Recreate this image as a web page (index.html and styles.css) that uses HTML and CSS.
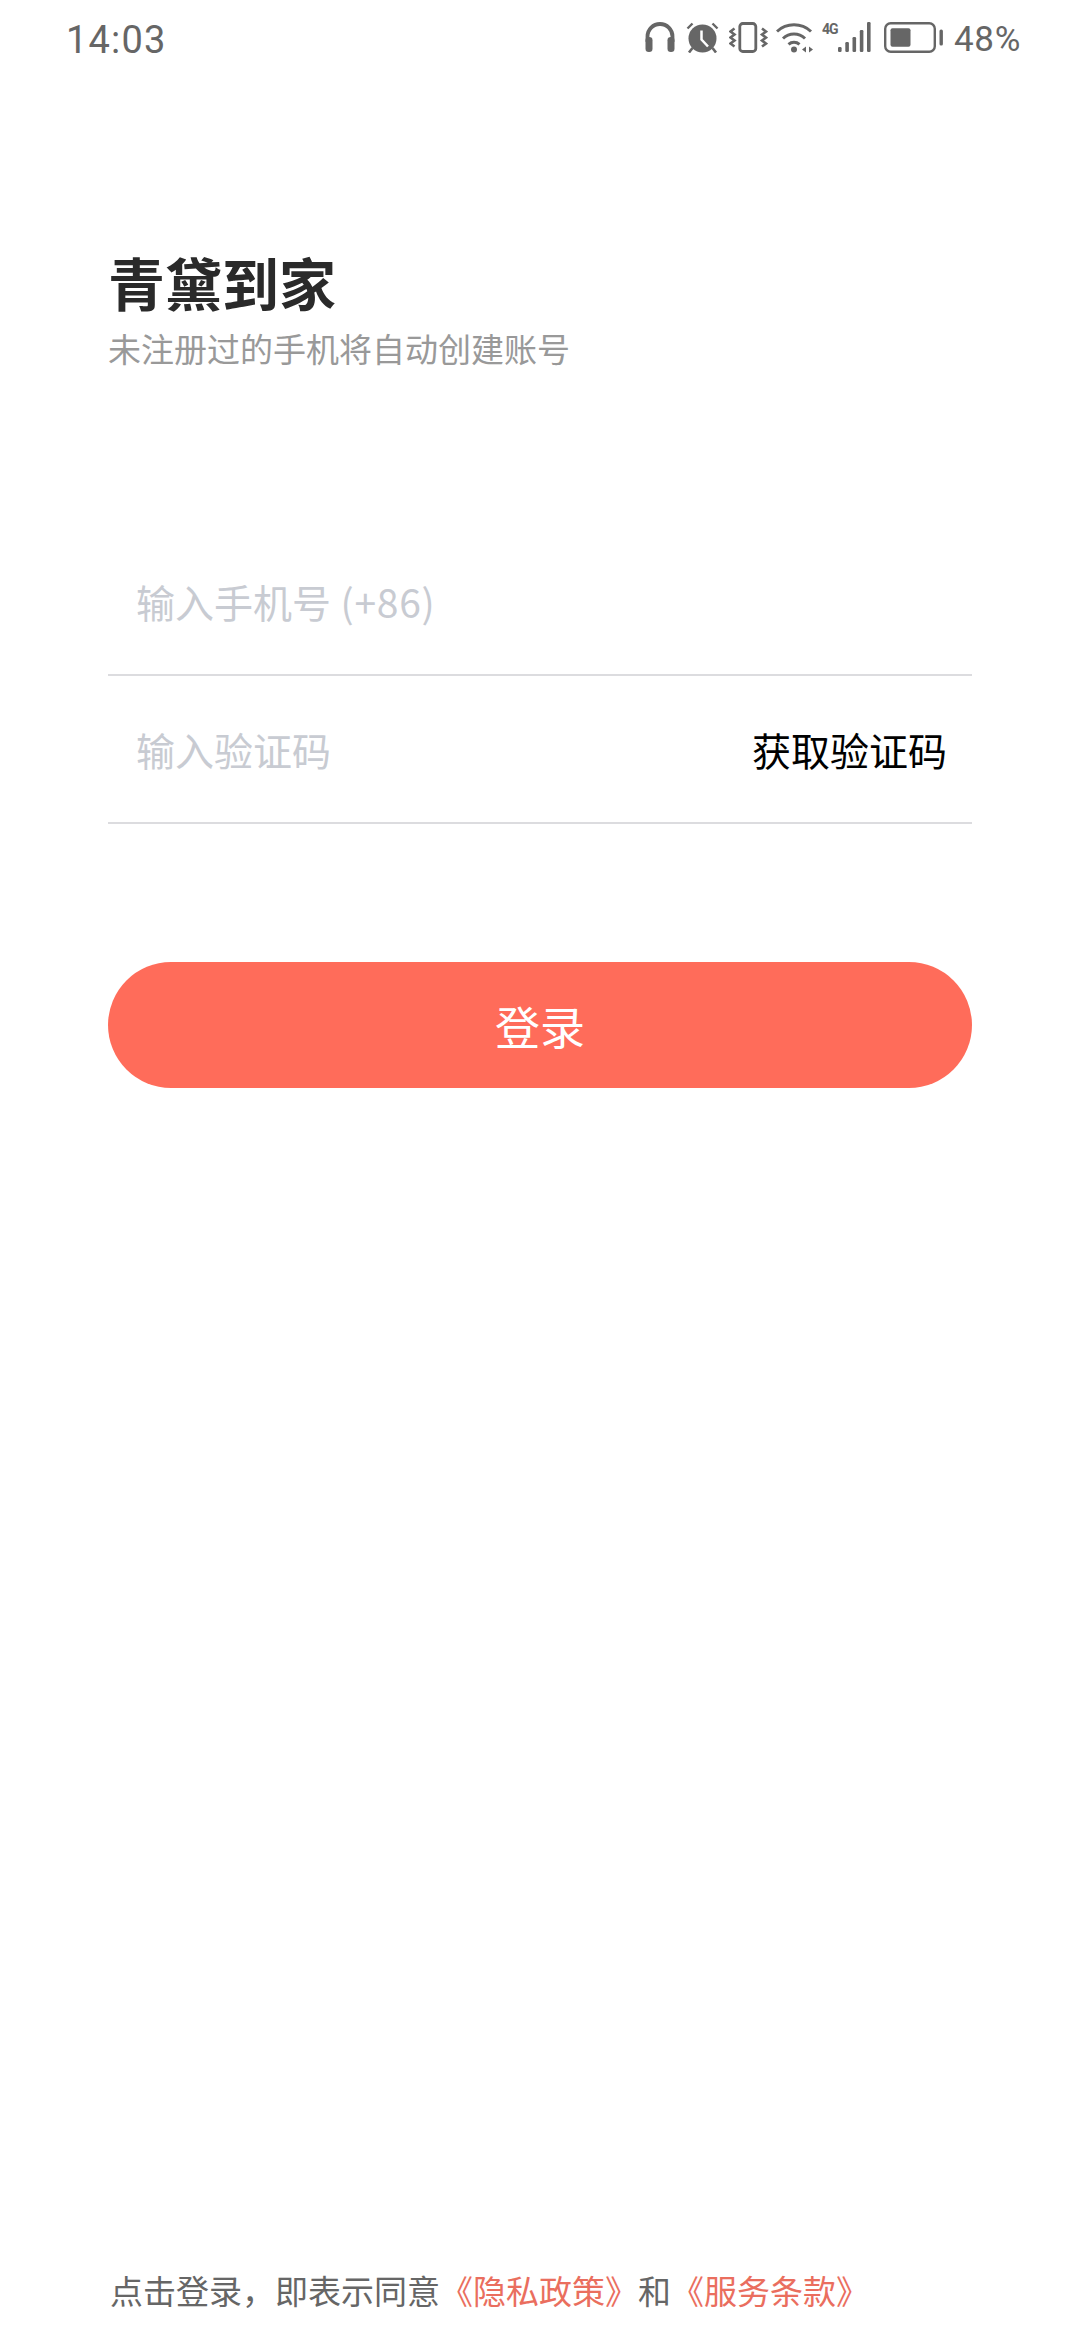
FILE: index.html
```html
<!DOCTYPE html>
<html lang="zh-CN">
<head>
<meta charset="utf-8">
<title>青黛到家</title>
<link rel="stylesheet" href="styles.css">
</head>
<body>
<div class="screen">
  <header class="status">
    <span class="time">14:03</span>
    <div class="status-icons">
      <svg class="ic ic-head" viewBox="0 0 30 30"><path d="M2.5 20V14.500a12.500 12.500 0 0 1 25 0V20" fill="none" stroke="#666" stroke-width="3.800"/><rect x="0.500" y="15" width="7" height="15" rx="3.300" fill="#666"/><rect x="22.500" y="15" width="7" height="15" rx="3.300" fill="#666"/></svg>
      <svg class="ic ic-alarm" viewBox="0 0 33 31"><circle cx="16.500" cy="16.500" r="14" fill="#666"/><path d="M15.500 8.500v9l6.500 7" fill="none" stroke="#fff" stroke-width="2.500"/><path d="M1.500 6.500L6.500 1.500M31.500 6.500L26.500 1.500" fill="none" stroke="#666" stroke-width="2.400"/><path d="M6.500 26L3 30.500M26.500 26L30 30.500" fill="none" stroke="#666" stroke-width="2.600"/></svg>
      <svg class="ic ic-vib" viewBox="0 0 39 31"><rect x="10.800" y="1.500" width="16" height="28" rx="3" fill="none" stroke="#666" stroke-width="2.800"/><path d="M5.500 6.500L1.500 9.500l4 3-4 3 4 3-4 3 4 3" fill="none" stroke="#666" stroke-width="2.600"/><path d="M33 6.500l4 3-4 3 4 3-4 3 4 3-4 3" fill="none" stroke="#666" stroke-width="2.600"/></svg>
      <svg class="ic ic-wifi" viewBox="0 0 38 31"><path d="M1 9.500A25 25 0 0 1 35 9.500" fill="none" stroke="#666" stroke-width="3"/><path d="M7 16.500A16 16 0 0 1 29 16.500" fill="none" stroke="#666" stroke-width="3"/><path d="M12.500 22.300A8.500 8.500 0 0 1 23.500 22.300" fill="none" stroke="#666" stroke-width="3"/><circle cx="18" cy="27.500" r="3" fill="#666"/><path d="M26 27.500l4-3v6zM33 24.500l4 3-4 3z" fill="#666"/></svg>
      <div class="net">
        <span class="net-label">4G</span>
        <svg class="ic ic-signal" viewBox="0 0 33 30"><rect x="0" y="25" width="3.600" height="5" rx="1.200" fill="#666"/><rect x="7.300" y="20" width="3.600" height="10" rx="1.200" fill="#666"/><rect x="14.500" y="15" width="3.600" height="15" rx="1.200" fill="#666"/><rect x="21.800" y="8" width="3.600" height="22" rx="1.200" fill="#666"/><rect x="29" y="0" width="3.600" height="30" rx="1.200" fill="#666"/></svg>
      </div>
      <svg class="ic ic-batt" viewBox="0 0 59 31"><rect x="1.200" y="1.200" width="49.600" height="28.600" rx="5.500" fill="none" stroke="#666" stroke-width="2.400"/><rect x="6.500" y="6.200" width="20" height="18.600" rx="2" fill="#666"/><rect x="55.500" y="7.500" width="3.400" height="16" rx="1.500" fill="#666"/></svg>
      <span class="pct">48%</span>
    </div>
  </header>

  <main class="content">
    <h1 class="title">青黛到家</h1>
    <p class="subtitle">未注册过的手机将自动创建账号</p>

    <div class="field field-phone">
      <span class="placeholder">输入手机号<span class="placeholder-code"> (+86)</span></span>
    </div>
    <div class="field">
      <span class="placeholder">输入验证码</span>
      <span class="get-code">获取验证码</span>
    </div>

    <div class="login-btn">登录</div>
  </main>

  <footer class="agree">点击登录，即表示同意<span class="link">《隐私政策》</span>和<span class="link">《服务条款》</span></footer>
</div>
</body>
</html>
```

FILE: styles.css
```css
* { box-sizing: border-box; }
html, body { margin: 0; padding: 0; background: #fff; }
body { font-family: "Noto Sans CJK SC", "Noto Sans", sans-serif; }

.screen {
  width: 1080px;
  height: 2340px;
  display: flex;
  flex-direction: column;
  overflow: hidden;
}

.status {
  height: 80px;
  display: flex;
  justify-content: space-between;
  align-items: flex-start;
  padding: 0 60px 0 66px;
  color: #666;
  font-family: Roboto, sans-serif;
}
.time { font-size: 38px; line-height: 81px; letter-spacing: 1.200px; }
.status-icons { display: flex; align-items: flex-start; padding-top: 22px; }
.ic { display: block; }
.ic-head { width: 30px; height: 30px; margin-right: 11px; }
.ic-alarm { width: 33px; height: 31px; margin-right: 10px; }
.ic-vib { width: 39px; height: 31px; margin-right: 8px; }
.ic-wifi { width: 38px; height: 31px; margin-right: 8px; }
.net { display: flex; align-items: flex-end; height: 30px; margin-right: 13px; }
.net-label { width: 16px; font-size: 14px; font-weight: 700; line-height: 14px; letter-spacing: -1px; align-self: flex-start; }
.ic-signal { width: 33px; height: 30px; }
.ic-batt { width: 59px; height: 31px; margin-right: 11px; }
.pct { font-size: 35px; line-height: 36px; letter-spacing: 0.700px; margin-right: -1px; }

.content {
  flex: 1;
  padding: 159px 108px 0;
}
.title {
  margin: 0;
  font-size: 57px;
  line-height: 85px;
  font-weight: 700;
  color: #2a2a2a;
}
.subtitle {
  margin: 0;
  font-size: 33px;
  line-height: 48px;
  color: #999;
}

.field {
  height: 148px;
  display: flex;
  align-items: center;
  justify-content: space-between;
  padding: 0 25px 0 28px;
  border-bottom: 2px solid #dcdcdf;
  font-size: 39px;
}
.field-phone { margin-top: 156px; }
.placeholder { color: #c8cbd2; }
.placeholder-code { letter-spacing: 0.750px; }
.get-code { color: #000; }

.login-btn {
  margin-top: 138px;
  height: 126px;
  border-radius: 63px;
  background: #ff6c5a;
  color: #fff;
  font-size: 45px;
  display: flex;
  align-items: center;
  justify-content: center;
}

.agree {
  padding: 0 0 26px 110px;
  font-size: 33px;
  line-height: 48px;
  color: #666;
}
.link { color: #ea6e5e; }
```
